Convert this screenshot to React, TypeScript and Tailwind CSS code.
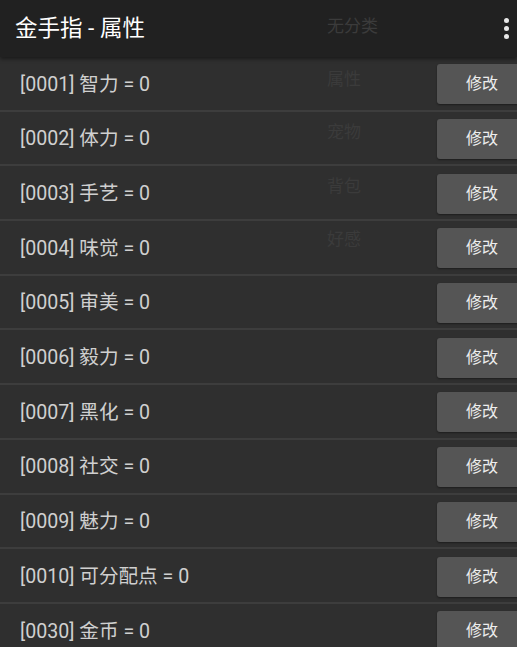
import React from "react";

const ROWS: { id: string; name: string; value: number }[] = [
  { id: "0001", name: "智力", value: 0 },
  { id: "0002", name: "体力", value: 0 },
  { id: "0003", name: "手艺", value: 0 },
  { id: "0004", name: "味觉", value: 0 },
  { id: "0005", name: "审美", value: 0 },
  { id: "0006", name: "毅力", value: 0 },
  { id: "0007", name: "黑化", value: 0 },
  { id: "0008", name: "社交", value: 0 },
  { id: "0009", name: "魅力", value: 0 },
  { id: "0010", name: "可分配点", value: 0 },
  { id: "0030", name: "金币", value: 0 },
];

const MENU = ["无分类", "属性", "宠物", "背包", "好感"];

export default function App() {
  return (
    <div
      className="relative w-[517px] h-[647px] overflow-hidden bg-[#2f2f2f]"
      style={{ fontFamily: 'Roboto, "Noto Sans CJK SC", sans-serif' }}
    >
      {/* Toolbar */}
      <div className="relative z-10 h-[57px] bg-[#212121] flex items-center justify-between shadow-[0_2px_4px_rgba(0,0,0,0.45)]">
        <h1 className="pl-[15px] text-[22.5px] text-white">金手指 - 属性</h1>
        <div className="w-[14px] flex flex-col items-center gap-[3px] mr-[4px]">
          <span className="w-[5px] h-[5px] rounded-full bg-[#e8e8e8]" />
          <span className="w-[5px] h-[5px] rounded-full bg-[#e8e8e8]" />
          <span className="w-[5px] h-[5px] rounded-full bg-[#e8e8e8]" />
        </div>
      </div>

      {/* List */}
      <div className="flex flex-col">
        {ROWS.map((r) => (
          <div
            key={r.id}
            className="h-[54.7px] shrink-0 flex items-center justify-between border-b-2 border-[#3d3d3d] pt-[2px]"
          >
            <span className="pl-[20px] text-[19.6px] text-[#d0d0d0]">
              [{r.id}] {r.name} = {r.value}
            </span>
            <button className="w-[82px] h-[40px] -mr-[2px] rounded-[3px] bg-[#555555] text-[16px] text-[#ededed] pl-[8px] shadow-[0_1px_2px_rgba(0,0,0,0.4)]">
              修改
            </button>
          </div>
        ))}
      </div>

      {/* Fading dropdown menu */}
      <div className="absolute z-20 top-0 left-[310px] w-[120px] flex flex-col pointer-events-none">
        {MENU.map((m) => (
          <div key={m} className="h-[53.3px] flex items-center pl-[17px] text-[17px] text-[#3b3b3b]">
            {m}
          </div>
        ))}
      </div>
    </div>
  );
}
